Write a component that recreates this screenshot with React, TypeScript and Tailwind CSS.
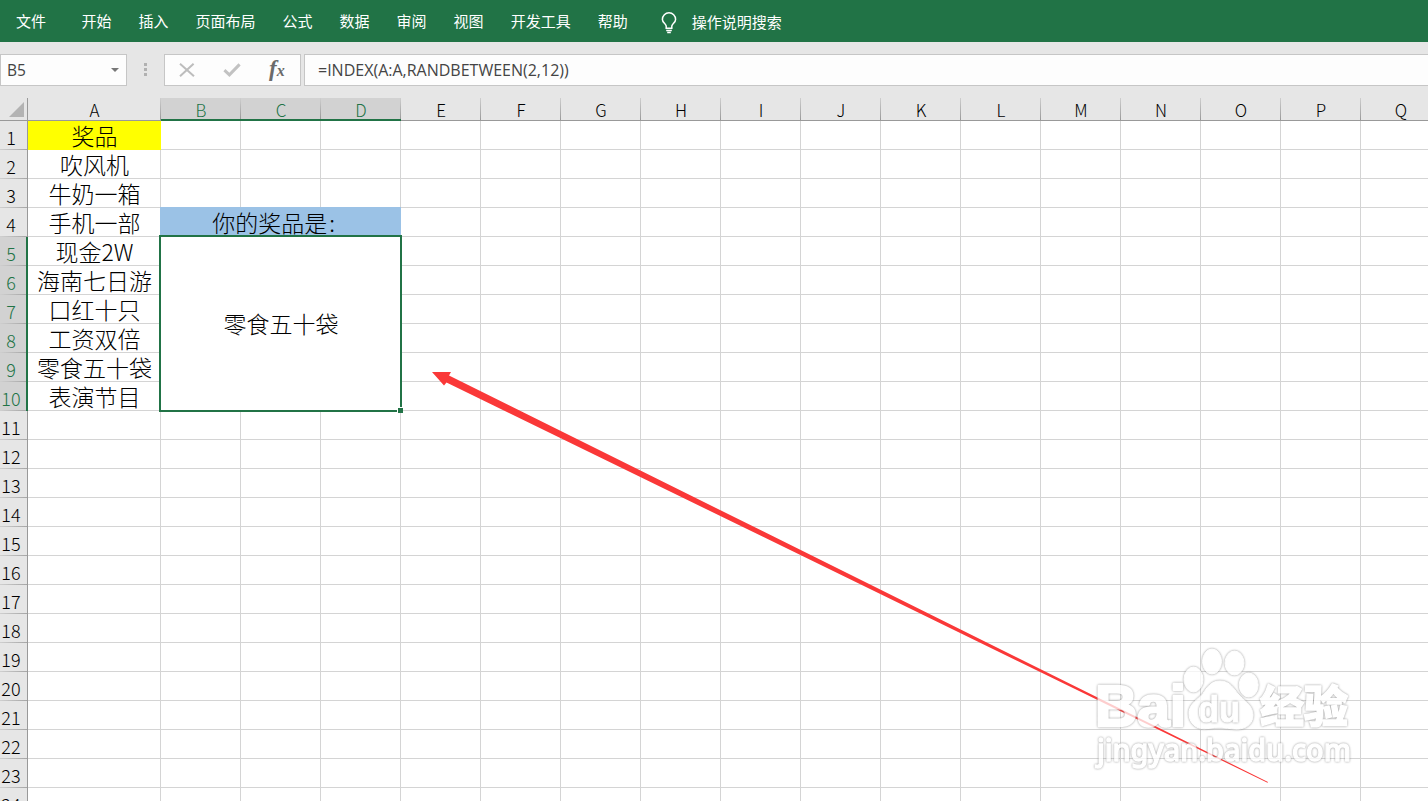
import clsx from "clsx";

const tabs = ["开始", "插入", "页面布局", "公式", "数据", "审阅", "视图", "开发工具", "帮助"];

const columns = ["B", "C", "D", "E", "F", "G", "H", "I", "J", "K", "L", "M", "N", "O", "P", "Q"];

const prizes = [
    "奖品",
    "吹风机",
    "牛奶一箱",
    "手机一部",
    "现金2W",
    "海南七日游",
    "口红十只",
    "工资双倍",
    "零食五十袋",
    "表演节目",
];

const rows = Array.from({ length: 24 }, (_, i) => i + 1);

function Ribbon() {
    return (
        <nav className="flex h-[42px] items-center bg-[#217346] pl-4 pb-px text-[15px] leading-5 text-white">
            <span className="mr-[35.5px]">文件</span>
            <div className="flex gap-[27px]">
                {tabs.map((tab) => (
                    <span key={tab}>{tab}</span>
                ))}
            </div>
            <svg
                className="ml-[33px] mt-1 h-[22px] w-4"
                viewBox="0 0 16 22"
                fill="none"
                stroke="currentColor"
                strokeWidth="1.5"
            >
                <path d="M5.2 16.2V14C4.6 11.6 1.4 10.4 1.4 7.4a6.6 6.6 0 0 1 13.2 0c0 3-3.2 4.2-3.8 6.6v2.2Z" />
                <path d="M5.2 18.4h5.6M6.2 20.4h3.6" />
            </svg>
            <span className="ml-[15px] mt-0.5">操作说明搜索</span>
        </nav>
    );
}

function FormulaBar() {
    return (
        <div className="flex h-14 items-start pt-3 text-[#444]">
            <div className="flex h-8 w-[127px] items-center justify-between border border-[#c6c6c6] bg-[#fdfdfd] pl-1.5 pr-[7px]">
                <span className="pt-px font-['Open_Sans','Noto_Sans',sans-serif] text-[15.5px]">B5</span>
                <svg className="h-1 w-2" viewBox="0 0 8 4" fill="#777">
                    <path d="M0 0h8L4 4Z" />
                </svg>
            </div>
            <div className="ml-[17px] mt-[9px] flex flex-col gap-0.5">
                <i className="size-[3px] bg-[#b1b1b1]" />
                <i className="size-[3px] bg-[#b1b1b1]" />
                <i className="size-[3px] bg-[#b1b1b1]" />
            </div>
            <div className="ml-[17px] flex h-8 w-[137px] items-center border border-[#c6c6c6] bg-[#fdfdfd] pl-3.5">
                <svg className="h-3.5 w-4" viewBox="0 0 16 14" stroke="#bdbdbd" strokeWidth="2">
                    <path d="M1 .8 15 13.2M14.6.8 1 13.2" />
                </svg>
                <svg
                    className="ml-7 h-3.5 w-[18px]"
                    viewBox="0 0 18 14"
                    fill="none"
                    stroke="#c2c2c2"
                    strokeWidth="3"
                >
                    <path d="m1.4 7.2 5 4.6L16.6 1.4" />
                </svg>
                <span className="ml-7 font-['Liberation_Serif',serif] text-[23px] leading-6 font-bold italic text-[#6b6b6b]">
                    f<span className="text-base">x</span>
                </span>
            </div>
            <div className="ml-[3px] flex h-8 flex-1 items-center border border-r-0 border-[#c6c6c6] bg-[#fdfdfd] pl-[13px]">
                <span className="mb-px font-['Open_Sans','Noto_Sans',sans-serif] text-[16px]">
                    =INDEX(A:A,RANDBETWEEN(2,12))
                </span>
            </div>
        </div>
    );
}

function ColumnHeader({ name, selected }: { name: string; selected?: boolean }) {
    return (
        <div
            className={clsx(
                "flex h-[23px] justify-end",
                selected
                    ? "border-b-2 border-[#217346] bg-[#d2d2d2] text-[#217346]"
                    : "border-b border-[#999]"
            )}
        >
            <span className="flex-1 pt-0.5 pl-px text-center text-[17px] leading-5">{name}</span>
            <i className="w-px bg-linear-to-b from-[#cfcfcf] to-[#999]" />
        </div>
    );
}

function RowHeader({ row }: { row: number }) {
    const selected = row >= 5 && row <= 10;
    return (
        <div
            className={clsx(
                "col-start-1 flex h-[29px] flex-col",
                selected
                    ? "border-r-2 border-[#217346] bg-[#d2d2d2] text-[#217346]"
                    : "border-r border-[#999]"
            )}
            style={{ gridRow: row + 1 }}
        >
            <span
                className={clsx(
                    "h-7 pt-1 text-center text-[18px] leading-6",
                    selected ? "pr-1" : "pr-[5px]"
                )}
            >
                {row}
            </span>
            <i className="h-px bg-linear-to-r from-[#cfcfcf] to-[#a6a6a6]" />
        </div>
    );
}

function Sheet() {
    return (
        <main className="grid grid-cols-[28px_133px_repeat(16,80px)] grid-rows-[23px_repeat(24,29px)] font-light text-black">
            <div className="flex items-end justify-end border-r border-b border-[#999] pr-[3px] pb-[3px]">
                <svg className="size-[15px]" viewBox="0 0 15 15" fill="#b3b3b3">
                    <path d="M15 0v15H0Z" />
                </svg>
            </div>
            <ColumnHeader name="A" />
            {columns.map((name) => (
                <ColumnHeader key={name} name={name} selected={name <= "D"} />
            ))}

            {rows.map((row) => (
                <RowHeader key={row} row={row} />
            ))}

            {rows.map((row) => (
                <div
                    key={row}
                    className={clsx(
                        "col-start-2 border-r border-b pt-px pl-px text-center text-[23px] leading-[27px] whitespace-nowrap",
                        row === 1 ? "border-[#ff0] bg-[#ff0]" : "border-[#d4d4d4] bg-white"
                    )}
                    style={{ gridRow: row + 1 }}
                >
                    {prizes[row - 1]}
                </div>
            ))}

            {rows.map((row) =>
                columns.map((name, i) => (
                    <div
                        key={name + row}
                        className="border-r border-b border-[#d4d4d4] bg-white"
                        style={{ gridRow: row + 1, gridColumn: i + 3 }}
                    />
                ))
            )}

            <div className="z-10 col-start-3 col-span-3 row-start-5 -mt-px -ml-px bg-[#9bc2e6] pr-3.5 text-center text-[23px] leading-[31px]">
                你的奖品是<span className="ml-0.5">:</span>
            </div>
            <div className="relative z-10 col-start-3 col-span-3 row-start-6 row-span-6 flex items-center justify-center bg-white pb-px text-[23px]">
                零食五十袋
                <div className="absolute -top-0.5 -left-0.5 -right-px -bottom-px border-2 border-[#217346]" />
                <i className="absolute -right-0.5 -bottom-0.5 size-[6px] border-t border-l border-white bg-[#217346]" />
            </div>
        </main>
    );
}

function Arrow() {
    return (
        <svg className="pointer-events-none absolute inset-0 z-20" width="1428" height="801" fill="#fa3838">
            <path d="M432 372H451L449 375.5 1268 782 1267.5 782.8 446.5 382.5 444 385.5Z" />
        </svg>
    );
}

// Translucent white mark, every shape outlined by its own soft shadow
function Watermark() {
    return (
        <svg
            className="pointer-events-none absolute top-[640px] left-[1085px] z-30 opacity-75"
            width="280"
            height="140"
            viewBox="1085 640 280 140"
            fill="#fff"
            stroke="#fff"
            strokeLinejoin="round"
        >
            <g className="drop-shadow-[0_0_1px_#777]">
                <ellipse cx="1193.5" cy="679.5" rx="9.5" ry="12.5" />
                <ellipse cx="1212" cy="661.5" rx="9.5" ry="12.5" />
                <ellipse cx="1234.5" cy="663" rx="9.5" ry="12" />
                <ellipse cx="1248.7" cy="685" rx="9.5" ry="12" />
                <path d="M1220 681c10 0 14 8 18 13 5 6 15 11 15 21 0 11-10 15-19 14-9-1-17-2-26-.5-11 2-20-5-19-17 1-8 9-12 14-18 4-6 8-12.500 17-12.500Z" />
            </g>
            <g className="font-['Liberation_Sans',sans-serif] font-bold drop-shadow-[0_0_1px_#777]">
                <text
                    x="1095"
                    y="726"
                    fontSize="58"
                    strokeWidth="2.5"
                    textLength="91"
                    lengthAdjust="spacingAndGlyphs"
                >
                    Bai
                </text>
                <text x="1198" y="721.5" fontSize="36" textLength="42" lengthAdjust="spacingAndGlyphs">
                    du
                </text>
            </g>
            <text
                className="font-['Noto_Sans_CJK_SC',sans-serif] font-black drop-shadow-[0_0_1px_#777]"
                x="1260"
                y="723"
                fontSize="44"
                strokeWidth="1.5"
                textLength="88"
            >
                经验
            </text>
            <text
                className="font-['Noto_Sans',sans-serif] font-medium drop-shadow-[0_0_1px_#777]"
                x="1097"
                y="761"
                fontSize="30"
                strokeWidth="1.4"
                textLength="254"
                lengthAdjust="spacingAndGlyphs"
            >
                jingyan.baidu.com
            </text>
        </svg>
    );
}

export default function App() {
    return (
        <div className="relative h-[801px] w-[1428px] overflow-hidden bg-[#e6e6e6] font-['Noto_Sans_CJK_SC',sans-serif]">
            <Ribbon />
            <FormulaBar />
            <Sheet />
            <Arrow />
            <Watermark />
        </div>
    );
}
